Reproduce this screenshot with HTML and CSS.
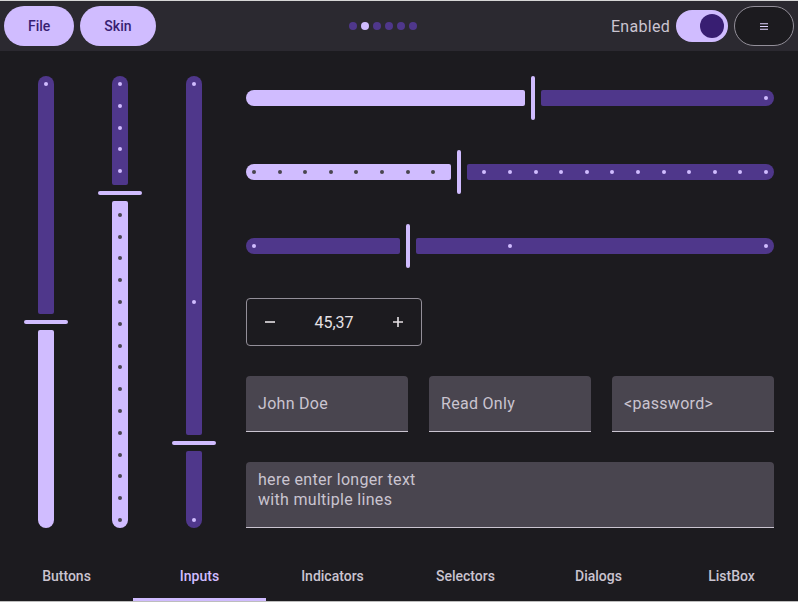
FILE: index.html
```html
<!DOCTYPE html>
<html>
<head>
<meta charset="utf-8">
<link rel="stylesheet" href="styles.css">
</head>
<body>
<div class="app">
  <header class="topbar">
    <div class="group-left">
      <button class="pill">File</button>
      <button class="pill">Skin</button>
    </div>
    <div class="pager">
      <span class="pdot"></span><span class="pdot on"></span><span class="pdot"></span><span class="pdot"></span><span class="pdot"></span><span class="pdot"></span>
    </div>
    <div class="group-right">
      <span class="label">Enabled</span>
      <div class="switch"><div class="thumb"></div></div>
      <button class="menu">
        <svg width="8" height="7" viewBox="0 0 8 7"><path d="M0 0.75H8M0 3.5H8M0 6.25H8" stroke="#e0d4ff" stroke-width="1.2"/></svg>
      </button>
    </div>
  </header>

  <main class="content">
    <div class="vsliders">
      <div class="vslider">
        <div class="vseg a inactive" style="flex-grow:0.546"></div>
        <div class="vzone"><div class="vhandle"></div></div>
        <div class="vseg b active" style="flex-grow:0.454"></div>
        <div class="vticks start"><span class="tick l"></span></div>
      </div>
      <div class="vslider">
        <div class="vseg a inactive" style="flex-grow:0.25"></div>
        <div class="vzone"><div class="vhandle"></div></div>
        <div class="vseg b active" style="flex-grow:0.75"></div>
        <div class="vticks">
          <span class="tick l"></span><span class="tick l"></span><span class="tick l"></span><span class="tick l"></span><span class="tick l"></span>
          <span class="tick h"></span>
          <span class="tick d"></span><span class="tick d"></span><span class="tick d"></span><span class="tick d"></span><span class="tick d"></span>
          <span class="tick d"></span><span class="tick d"></span><span class="tick d"></span><span class="tick d"></span><span class="tick d"></span>
          <span class="tick d"></span><span class="tick d"></span><span class="tick d"></span><span class="tick d"></span><span class="tick d"></span>
        </div>
      </div>
      <div class="vslider">
        <div class="vseg a inactive" style="flex-grow:0.823"></div>
        <div class="vzone"><div class="vhandle"></div></div>
        <div class="vseg b inactive" style="flex-grow:0.177"></div>
        <div class="vticks">
          <span class="tick l"></span><span class="tick l"></span><span class="tick l"></span>
        </div>
      </div>
    </div>

    <div class="rightcol">
      <div class="hslider">
        <div class="hseg a active" style="flex-grow:0.544"></div>
        <div class="hzone"><div class="hhandle"></div></div>
        <div class="hseg b inactive" style="flex-grow:0.456"></div>
        <div class="hticks end"><span class="tick l"></span></div>
      </div>
      <div class="hslider">
        <div class="hseg a active" style="flex-grow:0.4"></div>
        <div class="hzone"><div class="hhandle"></div></div>
        <div class="hseg b inactive" style="flex-grow:0.6"></div>
        <div class="hticks">
          <span class="tick d"></span><span class="tick d"></span><span class="tick d"></span><span class="tick d"></span>
          <span class="tick d"></span><span class="tick d"></span><span class="tick d"></span><span class="tick d"></span>
          <span class="tick h"></span>
          <span class="tick l"></span><span class="tick l"></span><span class="tick l"></span><span class="tick l"></span>
          <span class="tick l"></span><span class="tick l"></span><span class="tick l"></span><span class="tick l"></span>
          <span class="tick l"></span><span class="tick l"></span><span class="tick l"></span><span class="tick l"></span>
        </div>
      </div>
      <div class="hslider">
        <div class="hseg a inactive" style="flex-grow:0.3"></div>
        <div class="hzone"><div class="hhandle"></div></div>
        <div class="hseg b inactive" style="flex-grow:0.7"></div>
        <div class="hticks">
          <span class="tick l"></span><span class="tick l"></span><span class="tick l"></span>
        </div>
      </div>

      <div class="spinrow">
        <div class="spin">
          <span class="spinbtn"><svg width="12" height="12" viewBox="0 0 12 12"><path d="M1 6H11" stroke="#e6e1e5" stroke-width="1.6"/></svg></span>
          <span class="spinval">45,37</span>
          <span class="spinbtn"><svg width="12" height="12" viewBox="0 0 12 12"><path d="M1 6H11M6 1V11" stroke="#e6e1e5" stroke-width="1.6"/></svg></span>
        </div>
      </div>

      <div class="fields">
        <div class="field">John Doe</div>
        <div class="field">Read Only</div>
        <div class="field">&lt;password&gt;</div>
      </div>

      <div class="textarea">here enter longer text<br>with multiple lines</div>
    </div>
  </main>

  <nav class="tabs">
    <div class="tab">Buttons</div>
    <div class="tab sel">Inputs</div>
    <div class="tab">Indicators</div>
    <div class="tab">Selectors</div>
    <div class="tab">Dialogs</div>
    <div class="tab">ListBox</div>
  </nav>
</div>
</body>
</html>
```

FILE: styles.css
```css
* { box-sizing: border-box; }

html, body {
  margin: 0;
  padding: 0;
  background: #1c1b1f;
  font-family: Roboto, "Noto Sans", sans-serif;
}

.app {
  height: 602px;
  display: flex;
  flex-direction: column;
  border-top: 1px solid #d6d6d6;
  border-bottom: 1px solid #bdbdbd;
}

/* top bar */
.topbar {
  height: 50px;
  flex: none;
  background: #2b2930;
  display: flex;
  align-items: center;
  padding: 0 4px;
}

.group-left {
  display: flex;
  gap: 6px;
}

.pill {
  height: 40px;
  padding: 0 24px;
  border: none;
  border-radius: 20px;
  background: #d0bcff;
  color: #381e72;
  font-family: Roboto, sans-serif;
  font-weight: 500;
  font-size: 14px;
}

.pager {
  flex: 1;
  display: flex;
  justify-content: center;
  gap: 4px;
}

.pdot {
  width: 8px;
  height: 8px;
  border-radius: 50%;
  background: #4f378b;
}

.pdot.on { background: #d0bcff; }

.group-right {
  display: flex;
  align-items: center;
  gap: 6px;
}

.label {
  font-size: 16px;
  letter-spacing: 0.3px;
  color: #cac4d0;
}

.switch {
  width: 52px;
  height: 32px;
  border-radius: 16px;
  background: #d0bcff;
  display: flex;
  align-items: center;
  justify-content: flex-end;
  padding: 0 4px;
}

.thumb {
  width: 24px;
  height: 24px;
  border-radius: 50%;
  background: #381e72;
}

.menu {
  width: 60px;
  height: 40px;
  border: 1px solid #938f99;
  border-radius: 20px;
  background: #1c1b1f;
  display: flex;
  align-items: center;
  justify-content: center;
  padding: 0;
}

.menu svg { display: block; }

/* content */
.content {
  flex: 1;
  display: flex;
  gap: 30px;
  padding: 25px 24px 24px 24px;
}

.vsliders {
  display: flex;
  gap: 30px;
}

.vslider {
  position: relative;
  width: 44px;
  display: flex;
  flex-direction: column;
  align-items: center;
}

.vseg {
  width: 16px;
  flex-basis: 0;
}

.vseg.a { border-radius: 8px 8px 2px 2px; }
.vseg.b { border-radius: 2px 2px 8px 8px; }

.active { background: #d0bcff; }
.inactive { background: #4f378b; }

.vzone {
  height: 16px;
  width: 44px;
  flex: none;
  display: flex;
  align-items: center;
}

.vhandle {
  width: 44px;
  height: 4px;
  border-radius: 2px;
  background: #d0bcff;
}

.vticks {
  position: absolute;
  top: 0;
  bottom: 0;
  left: 20px;
  width: 4px;
  display: flex;
  flex-direction: column;
  justify-content: space-between;
  padding: 6px 0;
}

.vticks.start { justify-content: flex-start; }

.tick {
  width: 4px;
  height: 4px;
  border-radius: 50%;
  flex: none;
}

.tick.l { background: #d0bcff; }
.tick.d { background: #49454f; }
.tick.h { visibility: hidden; }

.rightcol {
  flex: 1;
  display: flex;
  flex-direction: column;
  gap: 30px;
}

.hslider {
  position: relative;
  height: 44px;
  flex: none;
  display: flex;
  align-items: center;
}

.hseg {
  height: 16px;
  flex-basis: 0;
}

.hseg.a { border-radius: 8px 2px 2px 8px; }
.hseg.b { border-radius: 2px 8px 8px 2px; }

.hzone {
  width: 16px;
  height: 44px;
  flex: none;
  display: flex;
  justify-content: center;
}

.hhandle {
  width: 4px;
  height: 44px;
  border-radius: 2px;
  background: #d0bcff;
}

.hticks {
  position: absolute;
  left: 0;
  right: 0;
  top: 20px;
  height: 4px;
  display: flex;
  justify-content: space-between;
  padding: 0 6px;
}

.hticks.end { justify-content: flex-end; }

/* spinbox */
.spinrow {
  display: flex;
  flex: none;
}

.spin {
  width: 176px;
  height: 48px;
  border: 1px solid #938f99;
  border-radius: 4px;
  display: flex;
  align-items: center;
  padding: 0 11px;
}

.spinbtn {
  width: 24px;
  height: 24px;
  display: flex;
  align-items: center;
  justify-content: center;
}

.spinbtn svg { display: block; }

.spinval {
  flex: 1;
  text-align: center;
  font-size: 16px;
  color: #e6e1e5;
}

/* text fields */
.fields {
  display: flex;
  gap: 21px;
  height: 56px;
  flex: none;
}

.field {
  flex: 1;
  background: #49454f;
  border-bottom: 1px solid #cac4d0;
  border-radius: 4px 4px 0 0;
  display: flex;
  align-items: center;
  padding: 0 12px;
  font-size: 16px;
  letter-spacing: 0.3px;
  color: #cac4d0;
}

.textarea {
  height: 66px;
  flex: none;
  background: #49454f;
  border-bottom: 1px solid #cac4d0;
  border-radius: 4px 4px 0 0;
  padding: 8px 12px;
  font-size: 16px;
  line-height: 20px;
  letter-spacing: 0.3px;
  color: #cac4d0;
}

/* tabs */
.tabs {
  height: 49px;
  flex: none;
  display: flex;
  background: #1c1b1f;
}

.tab {
  flex: 1;
  display: flex;
  align-items: center;
  justify-content: center;
  padding-bottom: 2px;
  font-weight: 500;
  font-size: 14px;
  color: #cac4d0;
}

.tab.sel {
  color: #d0bcff;
  box-shadow: inset 0 -3px 0 #d0bcff;
}
```
